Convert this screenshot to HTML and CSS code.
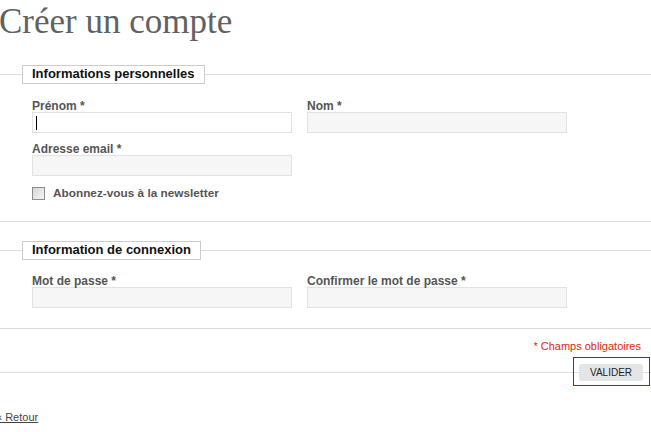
FILE: index.html
```html
<!DOCTYPE html>
<html lang="fr">
<head>
    <meta charset="UTF-8">
    <meta name="viewport" content="width=device-width, initial-scale=1.0">
    <title>Créer un compte</title>
    <link rel="stylesheet" href="styles.css">
</head>
<body>

<h1 class="page-title">Créer un compte</h1>

<form class="account-form">
    <fieldset class="section section-personal">
        <legend>Informations personnelles</legend>
        <div class="fields">
            <div class="field">
                <label for="firstname">Prénom *</label>
                <input type="text" id="firstname" class="input input-focus">
            </div>
            <div class="field">
                <label for="lastname">Nom *</label>
                <input type="text" id="lastname" class="input">
            </div>
            <div class="field">
                <label for="email">Adresse email *</label>
                <input type="text" id="email" class="input">
            </div>
        </div>
        <!-- Newsletter -->
        <label class="check-row">
            <input type="checkbox" class="check">
            <span>Abonnez-vous à la newsletter</span>
        </label>
    </fieldset>

    <fieldset class="section section-login">
        <legend>Information de connexion</legend>
        <div class="fields">
            <div class="field">
                <label for="password">Mot de passe *</label>
                <input type="password" id="password" class="input">
            </div>
            <div class="field">
                <label for="confirm">Confirmer le mot de passe *</label>
                <input type="password" id="confirm" class="input">
            </div>
        </div>
    </fieldset>

    <p class="required">* Champs obligatoires</p>

    <div class="actions">
        <div class="button-frame">
            <button type="submit" class="btn-submit">VALIDER</button>
        </div>
    </div>
</form>

<a href="#" class="back-link">« Retour</a>

</body>
</html>
```

FILE: styles.css
```css
body {
    font-family: 'Liberation Sans', Arial, sans-serif;
    margin: 0;
    color: #555;
    background: #fff;
}
.page-title {
    font-family: 'Liberation Serif', 'Times New Roman', serif;
    font-size: 35px;
    font-weight: normal;
    line-height: 40px;
    color: #616161;
    margin: 2px 0 0 -1px;
}
.section {
    margin: 0;
    border: 0;
    border-top: 1px solid #dcdcdc;
    border-bottom: 1px solid #dcdcdc;
    padding: 16px 0 21px 22px;
    min-inline-size: 0;
}
.section-personal {
    margin-top: 23px;
}
.section-login {
    margin-top: 19px;
    padding-bottom: 20px;
}
.section legend {
    font-size: 13px;
    font-weight: bold;
    line-height: 16px;
    color: #111;
    border: 1px solid #ccc;
    padding: 0 9px 1px;
    margin: 0;
}
.fields {
    display: grid;
    grid-template-columns: 260px 260px;
    column-gap: 15px;
    row-gap: 10px;
    margin-left: 10px;
}
.field label {
    display: block;
    font-size: 12px;
    font-weight: bold;
    line-height: 12px;
}
.section-login .field label {
    line-height: 11px;
}
.input {
    display: block;
    box-sizing: border-box;
    width: 260px;
    height: 21px;
    margin: 0;
    border: 1px solid #e2e2e2;
    background: #f6f6f6;
    padding: 2px 4px;
    font-family: inherit;
    font-size: 12px;
    outline: none;
}
.input-focus {
    background: linear-gradient(#000, #000) no-repeat 3px 3px / 1px 14px, #fff;
}
.check-row {
    display: flex;
    align-items: center;
    gap: 8px;
    margin: 11px 0 0 10px;
    font-size: 11.8px;
    font-weight: bold;
    line-height: 13px;
}
.check {
    appearance: none;
    -webkit-appearance: none;
    width: 13px;
    height: 13px;
    margin: 0;
    border: 1px solid #8e8e8e;
    background: linear-gradient(135deg, #d6d6d6, #f6f6f6);
}
.required {
    margin: 11px 10px 0 0;
    text-align: right;
    font-size: 11px;
    line-height: 13px;
    color: #e3260e;
}
.actions {
    display: flex;
    justify-content: flex-end;
    border-bottom: 1px solid #dcdcdc;
    padding-right: 1px;
}
.button-frame {
    box-shadow: inset 0 0 0 1px #e00000;
    padding: 7px 7px 5px 6px;
    margin: 4px 0 -14px;
}
.btn-submit {
    display: block;
    width: 64px;
    height: 17px;
    border: none;
    border-radius: 3px;
    background-color: #e4e5e7;
    color: #222;
    font-family: inherit;
    font-size: 10px;
    padding: 0;
    cursor: pointer;
}
.btn-submit:hover {
    background-color: #d8d9db;
}
.back-link {
    display: inline-block;
    margin: 38px 0 0 -4px;
    font-size: 11px;
    line-height: 13px;
    color: #444;
}
```
